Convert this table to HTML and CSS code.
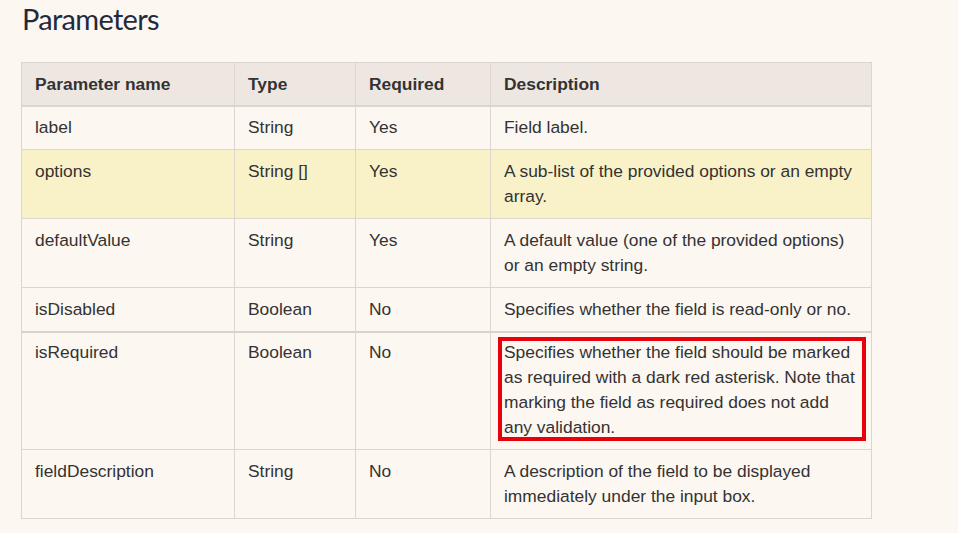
FILE: index.html
```html
<!DOCTYPE html>
<html>
<head>
<meta charset="utf-8">
<link rel="stylesheet" href="styles.css">
</head>
<body>
<h2 class="title">Parameters</h2>
<table class="params">
  <colgroup>
    <col class="c1"><col class="c2"><col class="c3"><col class="c4">
  </colgroup>
  <thead>
    <tr><th>Parameter name</th><th>Type</th><th>Required</th><th>Description</th></tr>
  </thead>
  <tbody>
    <tr class="first"><td>label</td><td>String</td><td>Yes</td><td>Field label.</td></tr>
    <tr class="hl"><td>options</td><td>String []</td><td>Yes</td><td>A sub-list of the provided options or an empty array.</td></tr>
    <tr><td>defaultValue</td><td>String</td><td>Yes</td><td>A default value (one of the provided options) or an empty string.</td></tr>
    <tr><td>isDisabled</td><td>Boolean</td><td>No</td><td>Specifies whether the field is read-only or no.</td></tr>
    <tr class="thick"><td>isRequired</td><td>Boolean</td><td>No</td><td><div class="marked">Specifies whether the field should be marked as required with a dark red asterisk. Note that marking the field as required does not add any validation.<span class="redbox"></span></div></td></tr>
    <tr><td>fieldDescription</td><td>String</td><td>No</td><td>A description of the field to be displayed immediately under the input box.</td></tr>
  </tbody>
</table>
</body>
</html>
```
FILE: styles.css
```css
html, body {
  margin: 0;
  padding: 0;
  background: #fdf7f1;
}
body {
  padding: 0 0 0 21px;
  font-family: "Liberation Sans", Arial, sans-serif;
  color: #333;
}
.title {
  margin: 0;
  padding: 0 0 0 1px;
  height: 62px;
  font-family: "Lato", sans-serif;
  font-weight: 400;
  font-size: 29px;
  letter-spacing: -0.7px;
  line-height: 38px;
  color: #1f2b3c;
}
.params {
  border-collapse: collapse;
  table-layout: fixed;
  width: 850px;
  font-size: 17.4px;
  line-height: 25px;
}
.c1 { width: 213px; }
.c2 { width: 121px; }
.c3 { width: 135px; }
.c4 { width: 381px; }
.params th, .params td {
  border: 1px solid #ddd6cf;
  padding: 9px 13px 9px 13px;
  text-align: left;
  vertical-align: top;
}
.params th {
  background: #eee7e1;
  font-weight: 700;
  padding: 9px 13px 8px 13px;
  border-bottom: 2px solid #ddd6cf;
  color: #333;
}
.params tr.first td {
  padding-top: 8px;
}
.params tr.hl td {
  background: #f9f2c9;
}
.params tr.thick td {
  border-top: 2px solid #d9d2cb;
  padding-top: 7px;
}
.params td:last-child {
  padding-right: 12px;
}
.marked {
  position: relative;
}
.redbox {
  position: absolute;
  left: -6px;
  top: -3px;
  width: 360px;
  height: 96px;
  border: 4px solid #e8000b;
  pointer-events: none;
}
```
